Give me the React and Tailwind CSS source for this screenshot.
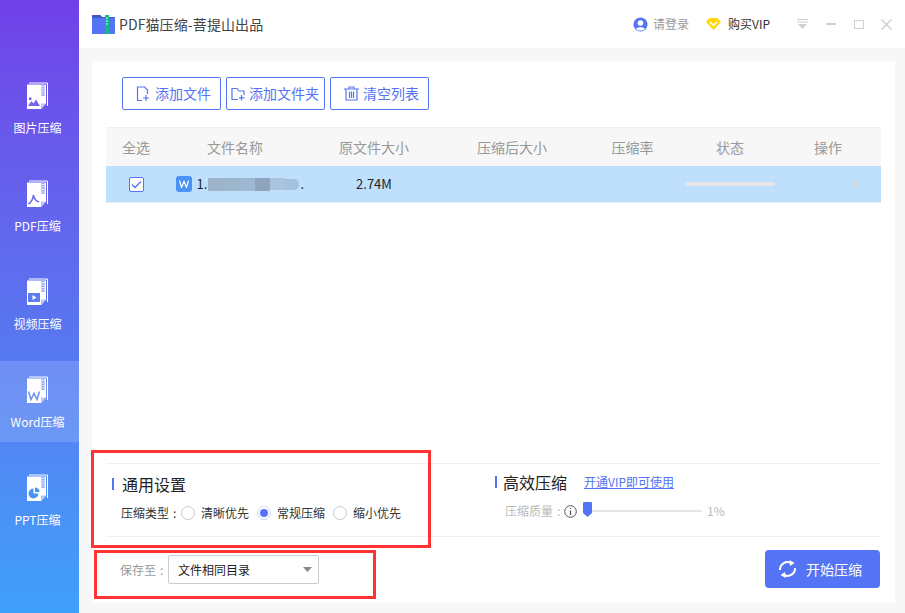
import React from "react";

const FONT = { fontFamily: '"Noto Sans CJK SC", "Noto Sans", sans-serif' };

// page icon used in the left rail, the small glyph sits in the lower half
const PageIcon = ({ children }) => (
  <svg width="23" height="28" viewBox="0 0 23 28" className="block">
    <path d="M3 1h18.500v23" fill="none" stroke="#fff" strokeWidth="1" />
    <path d="M1 2.500h19v19l-5 5.500H1z" fill="#fff" />
    <path d="M15 27v-5.500h5z" fill="#b9c6f6" />
    <rect x="15.500" y="3" width="3" height="11" fill="#9aa6ee" />
    <path d="M16 4.500h2M16 7h2M16 9.500h2M16 12h2" stroke="#fff" strokeWidth="0.8" />
    {children}
  </svg>
);

const sideItems = [
  {
    label: "图片压缩",
    glyph: <path d="M2 24l3.500-5 2 2.500 2.500-4 4 6.500zM3 15.500h2.500V18H3z" fill="#7d62ea" />,
  },
  {
    label: "PDF压缩",
    glyph: <path d="M2.500 24c3-2 4.500-5 5-9 .5 4 2.500 6 5.500 7" fill="none" stroke="#6a68ea" strokeWidth="1.600" />,
  },
  {
    label: "视频压缩",
    glyph: (
      <>
        <rect x="2" y="15" width="12" height="9" fill="#5c7cf0" />
        <path d="M6.500 17l4 2.500-4 2.500z" fill="#fff" />
      </>
    ),
  },
  {
    label: "Word压缩",
    active: true,
    glyph: <path d="M2.500 15.500l2.500 8 3-6 3 6 2.500-8" fill="none" stroke="#6b90f2" strokeWidth="1.500" />,
  },
  {
    label: "PPT压缩",
    glyph: (
      <>
        <path d="M7.500 14.500a5 5 0 1 0 5 5h-5z" fill="#4a93f6" />
        <path d="M9 13.500v4.500h4.500a4.500 4.500 0 0 0-4.500-4.500z" fill="#4a93f6" />
      </>
    ),
  },
];

const Sidebar = () => (
  <aside className="w-[79px] shrink-0 flex flex-col gap-[17px] pt-[67px] bg-gradient-to-b from-[#7040e8] via-[#5a72ef] to-[#3ea0f9]">
    {sideItems.map((item) => (
      <div
        key={item.label}
        className={`h-[81px] flex flex-col items-center pt-[15px] pr-[4px] ${item.active ? "bg-white/15" : ""}`}
      >
        <PageIcon>{item.glyph}</PageIcon>
        <span className="mt-[9px] text-[12px] leading-[18px] text-white">{item.label}</span>
      </div>
    ))}
  </aside>
);

const Header = () => (
  <header className="h-[48px] shrink-0 bg-white flex items-center pl-[13px] pr-[13px]">
    <svg width="23" height="20" viewBox="0 0 23 20" className="-mt-[1px]">
      <path d="M0 2a1 1 0 0 1 1-1h7l2 2h12a1 1 0 0 1 1 1v15a1 1 0 0 1-1 1H0z" fill="#5574f5" />
      <path d="M0 2a1 1 0 0 1 1-1h7l2 2h12a1 1 0 0 1 1 1H0z" fill="#3e57c9" />
      <rect x="13" y="1" width="4" height="19" fill="#12b886" />
      <path d="M14.500 4h1M14.500 7h1M14.500 10h1" stroke="#fff" strokeWidth="1.400" />
    </svg>
    <span className="ml-[4px] text-[14px] text-[#444] tracking-[0.1px]">PDF猫压缩-菩提山出品</span>

    <div className="ml-auto flex items-center">
      <svg width="15" height="15" viewBox="0 0 15 15">
        <circle cx="7.500" cy="7.500" r="7" fill="#5574f5" />
        <circle cx="7.500" cy="6" r="2.800" fill="#fff" />
        <path d="M3 12c1-2.500 8-2.500 9 0-2 2-7 2-9 0z" fill="#fff" />
      </svg>
      <span className="ml-[5px] text-[12px] text-[#999]">请登录</span>
      <svg width="15" height="12" viewBox="0 0 15 12" className="ml-[17px]">
        <path d="M3.500 0h8L15 4l-7.500 8L0 4z" fill="#ffd800" />
        <path d="M4 4l3.500 3.500L11 4" fill="none" stroke="#fff" strokeWidth="1.500" />
      </svg>
      <span className="ml-[7px] text-[12px] text-[#333]">购买VIP</span>
      <svg width="11" height="10" viewBox="0 0 11 10" className="ml-[27px]">
        <path d="M0 .5h11M0 3h11" stroke="#d0d0d0" strokeWidth="1.200" />
        <path d="M1 5h9L5.500 10z" fill="#d0d0d0" />
      </svg>
      <svg width="10" height="2" viewBox="0 0 10 2" className="ml-[18px]">
        <rect width="10" height="2" fill="#d0d0d0" />
      </svg>
      <svg width="10" height="9" viewBox="0 0 10 9" className="ml-[18px]">
        <rect x=".5" y=".5" width="9" height="8" fill="none" stroke="#d0d0d0" />
      </svg>
      <svg width="11" height="11" viewBox="0 0 11 11" className="ml-[17px]">
        <path d="M.5.500l10 10M10.500.500l-10 10" stroke="#d0d0d0" strokeWidth="1.500" />
      </svg>
    </div>
  </header>
);

const ToolButton = ({ icon, label, className }) => (
  <button
    className={`h-[33px] w-[99px] flex items-center border border-[#5574f5] rounded-[2px] bg-white text-[14px] text-[#5574f5] whitespace-nowrap ${className}`}
  >
    {icon}
    {label}
  </button>
);

const Toolbar = () => (
  <div className="flex gap-[5px] pl-[30px] pt-[16px]">
    <ToolButton
      label="添加文件"
      className="pl-[13px] gap-[5px]"
      icon={
        <svg width="14" height="16" viewBox="0 0 14 16" fill="none" stroke="#5574f5" strokeWidth="1.200">
          <path d="M6 14.500H1.500V1h7l3 3v4" />
          <path d="M10 9v6M7 12h6" />
        </svg>
      }
    />
    <ToolButton
      label="添加文件夹"
      className="pl-[4px] gap-[4px]"
      icon={
        <svg width="14" height="14" viewBox="0 0 14 14" fill="none" stroke="#5574f5" strokeWidth="1.200">
          <path d="M7 12.500H1V1.500h5l2 2.500h5v4" />
          <path d="M10.500 8v5.500M8 10.800h5.500" />
        </svg>
      }
    />
    <ToolButton
      label="清空列表"
      className="pl-[13px] gap-[4px]"
      icon={
        <svg width="15" height="15" viewBox="0 0 15 15" fill="none" stroke="#5574f5" strokeWidth="1.200">
          <path d="M0 3h15M5 3V1h5v2M2 3v11h11V3M5.500 5.500V12M7.500 5.500V12M9.500 5.500V12" />
        </svg>
      }
    />
  </div>
);

const COLS = "grid grid-cols-[60px_138px_140px_136px_105px_90px_106px] items-center text-center";

const FileTable = () => (
  <div className="mx-[14px] mt-[17px]">
    <div className={`${COLS} h-[39px] bg-[#f7f7f7] border-t border-[#f0f0f0] text-[14px] text-[#999]`}>
      {["全选", "文件名称", "原文件大小", "压缩后大小", "压缩率", "状态", "操作"].map((h) => (
        <div key={h}>{h}</div>
      ))}
    </div>
    <div className={`${COLS} h-[37px] bg-[#bfe0fd] border-b border-[#e5eef6] text-[13px] text-[#222]`}>
      <div className="flex justify-center">
        <span className="w-[15px] h-[15px] bg-white border border-[#5574f5] rounded-[2px] flex items-center justify-center">
          <svg width="11" height="9" viewBox="0 0 11 9" fill="none" stroke="#5574f5" strokeWidth="1.400">
            <path d="M1 4.500l3 3 6-6" />
          </svg>
        </span>
      </div>
      <div className="flex items-center pl-[10px]">
        <span className="w-[16px] h-[16px] rounded-[3px] bg-[#4a93f6] flex items-center justify-center">
          <svg width="10" height="8" viewBox="0 0 10 8" fill="none" stroke="#fff" strokeWidth="1.200">
            <path d="M.5.500l2 7 2.500-6 2.500 6 2-7" />
          </svg>
        </span>
        <span className="ml-[5px]">1.</span>
        {/* blurred out file name */}
        <span className="flex h-[13px] items-center ml-[1px]">
          <span className="w-[17px] h-[13px] bg-[#9db3c9]" />
          <span className="w-[15px] h-[13px] bg-[#9cb6cd]" />
          <span className="w-[15px] h-[13px] bg-[#9db8d0]" />
          <span className="w-[15px] h-[13px] bg-[#8fa5bd]" />
          <span className="w-[15px] h-[12px] bg-[#a8c4de]" />
          <span className="w-[14px] h-[11px] rounded-r-[5px] bg-[#a5c2dc]" />
        </span>
        <span className="ml-[1px]">.</span>
      </div>
      <div>2.74M</div>
      <div />
      <div />
      <div className="h-[4px] rounded-full bg-[#e6e6e6]" />
      <div className="flex justify-end pr-[22px]">
        <svg width="8" height="8" viewBox="0 0 8 8">
          <path d="M1 1l6 6M7 1l-6 6" stroke="#d5d5d5" strokeWidth="1.600" />
        </svg>
      </div>
    </div>
  </div>
);

// the original font centres its colon, so it is set apart from the label
const FieldLabel = ({ children, className }) => (
  <span className={`flex shrink-0 whitespace-nowrap ${className}`}>
    {children}
    <span className="ml-[4px]">:</span>
  </span>
);

const Radio = ({ label, checked }) => (
  <span className="flex items-center">
    <span
      className={`w-[14px] h-[14px] rounded-full border flex items-center justify-center bg-white ${
        checked ? "border-[#c9d3fb]" : "border-[#ccc]"
      }`}
    >
      {checked && <span className="w-[8px] h-[8px] rounded-full bg-[#5574f5]" />}
    </span>
    <span className="ml-[6px]">{label}</span>
  </span>
);

const SectionBar = () => <span className="w-[2px] h-[12px] bg-[#5574f5]" />;

const Settings = () => (
  <div className="mt-auto mx-[14px] h-[74px] border-y border-[#f0f0f0] flex">
    <div className="w-[389px] pl-[6px] pt-[9px]">
      <div className="flex items-center h-[22px]">
        <SectionBar />
        <span className="ml-[8px] text-[16px] text-[#222]">通用设置</span>
      </div>
      <div className="flex items-center mt-[9px] pl-[9px] text-[12px] leading-[18px] text-[#333] gap-[8px]">
        <FieldLabel className="w-[60px] -mr-[8px]">压缩类型</FieldLabel>
        <Radio label="清晰优先" />
        <Radio label="常规压缩" checked />
        <Radio label="缩小优先" />
      </div>
    </div>
    <div className="flex-1 pt-[7px]">
      <div className="flex items-center h-[22px]">
        <SectionBar />
        <span className="ml-[6px] text-[16px] text-[#222]">高效压缩</span>
        <span className="ml-[17px] text-[12px] text-[#5574f5] underline">开通VIP即可使用</span>
      </div>
      <div className="flex items-center mt-[9px] pl-[10px] text-[12px] leading-[18px] text-[#bbb]">
        <FieldLabel className="w-[60px]">压缩质量</FieldLabel>
        <svg width="13" height="13" viewBox="0 0 13 13" className="-ml-[1px]">
          <circle cx="6.500" cy="6.500" r="5.800" fill="#fff" stroke="#555" />
          <path d="M6.500 3v1M6.500 5.500V10" stroke="#555" strokeWidth="1.300" />
        </svg>
        <span className="relative ml-[6px] w-[119px] h-[2px] bg-[#e6e6e6]">
          <svg width="9" height="15" viewBox="0 0 9 15" className="absolute left-0 -top-[8px]">
            <path d="M0 1a1 1 0 0 1 1-1h7a1 1 0 0 1 1 1v10l-4.500 4L0 11z" fill="#5574f5" />
          </svg>
        </span>
        <span className="ml-[5px]">1%</span>
      </div>
    </div>
  </div>
);

const SaveBar = () => (
  <div className="h-[66px] shrink-0 flex items-start pl-[28px] pr-[15px]">
    <div className="flex items-center mt-[18px] text-[12px]">
      <span className="text-[#999]">
        <FieldLabel className="w-[48px]">保存至</FieldLabel>
      </span>
      <div className="w-[151px] h-[29px] border border-[#ccc] rounded-[2px] flex items-center pl-[9px] text-[#222]">
        文件相同目录
        <svg width="9" height="5" viewBox="0 0 9 5" className="ml-auto mr-[6px]">
          <path d="M0 0h9L4.500 5z" fill="#888" />
        </svg>
      </div>
    </div>
    <button className="ml-auto mt-[13px] w-[115px] h-[38px] rounded-[4px] bg-[#5574f5] flex items-center pl-[13px] text-[14px] text-white">
      <svg width="19" height="18" viewBox="0 0 19 18" fill="none" stroke="#fff" strokeWidth="2">
        <path d="M2 10a7.500 7.500 0 0 1 11-7" />
        <path d="M17 8a7.500 7.500 0 0 1-11 7" />
        <path d="M11.500 0l5 3-4.500 3z" fill="#fff" stroke="none" />
        <path d="M7.500 18l-5-3 4.500-3z" fill="#fff" stroke="none" />
      </svg>
      <span className="ml-[9px]">开始压缩</span>
    </button>
  </div>
);

export default function App() {
  return (
    <div className="relative w-[905px] h-[613px] overflow-hidden flex bg-[#f7f7f7]" style={FONT}>
      <Sidebar />
      <div className="flex-1 flex flex-col">
        <Header />
        <main className="mt-[13px] ml-[13px] mr-[10px] mb-[10px] flex-1 bg-white flex flex-col">
          <Toolbar />
          <FileTable />
          <Settings />
          <SaveBar />
        </main>
      </div>
      {/* red annotation boxes drawn over the app */}
      <div className="absolute left-[91px] top-[450px] w-[340px] h-[98px] border-[3px] border-[#ff3333] pointer-events-none" />
      <div className="absolute left-[94px] top-[550px] w-[282px] h-[49px] border-[3px] border-[#ff3333] pointer-events-none" />
    </div>
  );
}
